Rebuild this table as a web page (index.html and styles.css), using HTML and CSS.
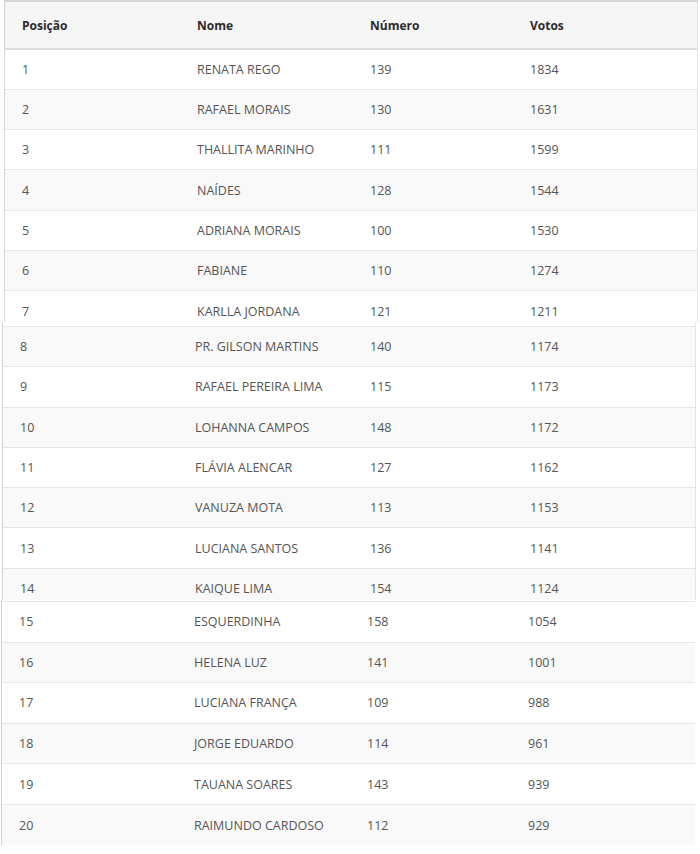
FILE: index.html
```html
<!DOCTYPE html>
<html lang="pt">
<head>
<meta charset="utf-8">
<title>Resultado</title>
<link rel="stylesheet" href="styles.css">
</head>
<body>
<div class="page">
  <section class="piece piece-1">
    <table class="rank">
      <colgroup><col class="c1"><col class="c2"><col class="c3"><col class="c4"></colgroup>
      <thead>
        <tr><th>Posição</th><th>Nome</th><th>Número</th><th>Votos</th></tr>
      </thead>
      <tbody>
        <tr><td>1</td><td>RENATA REGO</td><td>139</td><td>1834</td></tr>
        <tr class="even"><td>2</td><td>RAFAEL MORAIS</td><td>130</td><td>1631</td></tr>
        <tr><td>3</td><td>THALLITA MARINHO</td><td>111</td><td>1599</td></tr>
        <tr class="even"><td>4</td><td>NAÍDES</td><td>128</td><td>1544</td></tr>
        <tr><td>5</td><td>ADRIANA MORAIS</td><td>100</td><td>1530</td></tr>
        <tr class="even"><td>6</td><td>FABIANE</td><td>110</td><td>1274</td></tr>
        <tr><td>7</td><td>KARLLA JORDANA</td><td>121</td><td>1211</td></tr>
      </tbody>
    </table>
  </section>
  <section class="piece piece-2">
    <div class="lead"></div>
    <table class="rank">
      <colgroup><col class="c1"><col class="c2"><col class="c3"><col class="c4"></colgroup>
      <tbody>
        <tr class="even"><td>8</td><td>PR. GILSON MARTINS</td><td>140</td><td>1174</td></tr>
        <tr><td>9</td><td>RAFAEL PEREIRA LIMA</td><td>115</td><td>1173</td></tr>
        <tr class="even"><td>10</td><td>LOHANNA CAMPOS</td><td>148</td><td>1172</td></tr>
        <tr><td>11</td><td>FLÁVIA ALENCAR</td><td>127</td><td>1162</td></tr>
        <tr class="even"><td>12</td><td>VANUZA MOTA</td><td>113</td><td>1153</td></tr>
        <tr><td>13</td><td>LUCIANA SANTOS</td><td>136</td><td>1141</td></tr>
        <tr class="even"><td>14</td><td>KAIQUE LIMA</td><td>154</td><td>1124</td></tr>
      </tbody>
    </table>
  </section>
  <section class="piece piece-3">
    <div class="lead"></div>
    <table class="rank">
      <colgroup><col class="c1"><col class="c2"><col class="c3"><col class="c4"></colgroup>
      <tbody>
        <tr><td>15</td><td>ESQUERDINHA</td><td>158</td><td>1054</td></tr>
        <tr class="even"><td>16</td><td>HELENA LUZ</td><td>141</td><td>1001</td></tr>
        <tr><td>17</td><td>LUCIANA FRANÇA</td><td>109</td><td>988</td></tr>
        <tr class="even"><td>18</td><td>JORGE EDUARDO</td><td>114</td><td>961</td></tr>
        <tr><td>19</td><td>TAUANA SOARES</td><td>143</td><td>939</td></tr>
        <tr class="even"><td>20</td><td>RAIMUNDO CARDOSO</td><td>112</td><td>929</td></tr>
      </tbody>
    </table>
  </section>
</div>
</body>
</html>
```
FILE: styles.css
```css
html, body {
  margin: 0;
  padding: 0;
  background: #ffffff;
}

body {
  font-family: "Open Sans", "Noto Sans", "DejaVu Sans", sans-serif;
  font-size: 12.5px;
  color: #555555;
}

.page {
  width: 700px;
  height: 854px;
  display: flex;
  flex-direction: column;
  overflow: hidden;
}

.piece {
  overflow: hidden;
  flex: none;
  width: 694px;
  box-sizing: border-box;
  border-left: 1px solid #d4d4d4;
}

.piece-1 {
  height: 322px;
  margin-left: 4px;
  border-right: 1px solid #e4e4e4;
  border-top: 2px solid #d6d6d6;
}

.piece-2 {
  height: 278px;
  margin-left: 2px;
  border-right: 1px solid #e4e4e4;
}

.piece-2 .lead {
  height: 4px;
  background: #ffffff;
}

.piece-3 {
  height: 246px;
  margin-left: 1px;
}

.piece-3 .lead {
  height: 1px;
  background: #ffffff;
}

.rank {
  width: 100%;
  border-collapse: collapse;
  table-layout: fixed;
}

.piece-1 .c1 { width: 175px; }
.piece-1 .c2 { width: 173px; }
.piece-1 .c3 { width: 160px; }

.piece-2 .c1 { width: 175px; }
.piece-2 .c2 { width: 175px; }
.piece-2 .c3 { width: 160px; }

.piece-3 .c1 { width: 175px; }
.piece-3 .c2 { width: 173px; }
.piece-3 .c3 { width: 161px; }

.rank th {
  text-align: left;
  font-size: 12px;
  font-weight: 700;
  color: #2a2a2a;
  background: #f6f6f6;
  height: 46px;
  padding: 0 0 0 17px;
  border-bottom: 2px solid #dcdcdc;
  vertical-align: middle;
}

.rank td {
  height: 40.3px;
  padding: 0 0 0 17px;
  border-top: 1px solid #e6e6e6;
  vertical-align: middle;
  box-sizing: border-box;
  white-space: nowrap;
}

.piece-3 .rank td {
  height: 40.6px;
}

.rank tbody tr {
  background: #ffffff;
}

.rank tbody tr.even {
  background: #f9f9f9;
}

.rank thead + tbody tr:first-child td {
  border-top: none;
}
```
